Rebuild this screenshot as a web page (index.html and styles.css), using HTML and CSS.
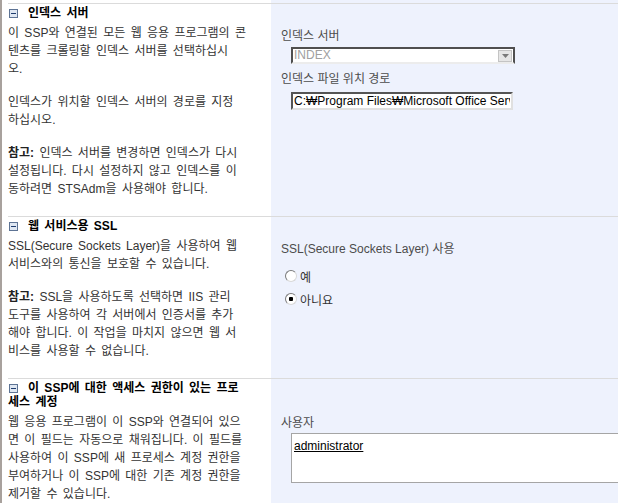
FILE: index.html
```html
<!DOCTYPE html>
<html lang="ko">
<head>
    <meta charset="UTF-8">
    <title>공유 서비스 공급자 편집</title>
    <link rel="stylesheet" href="styles.css">
</head>
<body>
    <div class="page">
        <section class="row">
            <div class="info">
                <div class="info-body">
                    <h3 class="section-title"><span class="toggle"><svg width="9" height="9" viewBox="0 0 9 9"><rect x="0.5" y="0.5" width="8" height="8" fill="#dfe7f2" stroke="#5d7394"/><path d="M2 4.5h5" stroke="#1e3c6e"/></svg></span>인덱스 서버</h3>
                    <p class="desc">이 SSP와 연결된 모든 웹 응용 프로그램의 콘<br>텐츠를 크롤링할 인덱스 서버를 선택하십시<br>오.</p>
                    <p class="desc">인덱스가 위치할 인덱스 서버의 경로를 지정<br>하십시오.</p>
                    <p class="desc"><b>참고:</b> 인덱스 서버를 변경하면 인덱스가 다시<br>설정됩니다. 다시 설정하지 않고 인덱스를 이<br>동하려면 STSAdm을 사용해야 합니다.</p>
                </div>
            </div>
            <div class="controls">
                <div class="controls-body">
                    <label class="field-label">인덱스 서버</label>
                    <div class="select is-disabled">
                        <span class="select-value">INDEX</span>
                        <span class="select-arrow"><svg width="7" height="4" viewBox="0 0 7 4"><path d="M0 0h7L3.5 4z" fill="#7a7a7a"/></svg></span>
                    </div>
                    <label class="field-label">인덱스 파일 위치 경로</label>
                    <input class="text-input" type="text" value="C:₩Program Files₩Microsoft Office Servers₩12.0₩Data₩Office Server₩Applications">
                </div>
            </div>
        </section>

        <section class="row">
            <div class="info">
                <div class="info-body">
                    <h3 class="section-title"><span class="toggle"><svg width="9" height="9" viewBox="0 0 9 9"><rect x="0.5" y="0.5" width="8" height="8" fill="#dfe7f2" stroke="#5d7394"/><path d="M2 4.5h5" stroke="#1e3c6e"/></svg></span>웹 서비스용 SSL</h3>
                    <p class="desc">SSL(Secure Sockets Layer)을 사용하여 웹<br>서비스와의 통신을 보호할 수 있습니다.</p>
                    <p class="desc"><b>참고:</b> SSL을 사용하도록 선택하면 IIS 관리<br>도구를 사용하여 각 서버에서 인증서를 추가<br>해야 합니다. 이 작업을 마치지 않으면 웹 서<br>비스를 사용할 수 없습니다.</p>
                </div>
            </div>
            <div class="controls">
                <div class="controls-body">
                    <label class="field-label">SSL(Secure Sockets Layer) 사용</label>
                    <div class="radio-group">
                        <label class="radio"><input type="radio" name="ssl">예</label>
                        <label class="radio"><input type="radio" name="ssl" checked>아니요</label>
                    </div>
                </div>
            </div>
        </section>

        <section class="row">
            <div class="info">
                <div class="info-body">
                    <h3 class="section-title"><span class="toggle"><svg width="9" height="9" viewBox="0 0 9 9"><rect x="0.5" y="0.5" width="8" height="8" fill="#dfe7f2" stroke="#5d7394"/><path d="M2 4.5h5" stroke="#1e3c6e"/></svg></span>이 SSP에 대한 액세스 권한이 있는 프로<br>세스 계정</h3>
                    <p class="desc">웹 응용 프로그램이 이 SSP와 연결되어 있으<br>면 이 필드는 자동으로 채워집니다. 이 필드를<br>사용하여 이 SSP에 새 프로세스 계정 권한을<br>부여하거나 이 SSP에 대한 기존 계정 권한을<br>제거할 수 있습니다.</p>
                </div>
            </div>
            <div class="controls">
                <div class="controls-body tall">
                    <label class="field-label">사용자</label>
                    <div class="people-picker"><span class="user">administrator</span></div>
                </div>
            </div>
        </section>
    </div>
</body>
</html>
```

FILE: styles.css
```css
html, body {
    overflow: hidden;
}

body {
    margin: 0;
    padding: 0;
    font-family: "Liberation Sans", "Noto Sans CJK KR", sans-serif;
    font-size: 12px;
    color: #333;
    background: white;
}

.page {
    border-left: 2px solid #a8a19d;
    min-height: 503px;
}

.row {
    display: grid;
    grid-template-columns: 269px 1fr;
}

.info {
    padding: 3px 0 15px 6px;
}

.info-body {
    border-top: 1px solid #dbdbdb;
    padding-top: 2px;
}

.section-title {
    margin: 0 0 4px 0;
    font-size: 12px;
    line-height: 14px;
    font-weight: bold;
    color: #000;
    word-spacing: 2px;
}

.toggle {
    display: inline-block;
    width: 9px;
    height: 9px;
    margin: 0 10px 0 1px;
    vertical-align: -1px;
}

.toggle svg {
    display: block;
}

.desc {
    margin: 0;
    line-height: 18px;
    word-spacing: 2px;
    white-space: nowrap;
}

.desc + .desc {
    margin-top: 15px;
}

.desc b {
    color: #222;
}

.controls {
    background-color: #eef2fd;
    padding-top: 3px;
    overflow: hidden;
}

.controls-body {
    border-top: 1px solid #dbdbdb;
    padding: 23px 0 0 10px;
}

.controls-body.tall {
    padding-top: 35px;
}

.field-label {
    display: block;
    line-height: 18px;
    color: #4c4c4c;
}

.select {
    display: flex;
    align-items: center;
    width: 224px;
    height: 17px;
    margin: 2px 0 6px 10px;
    box-sizing: border-box;
    border: 2px solid #4f4f4f;
    border-bottom-color: #ececec;
    background: white;
}

.select-value {
    flex: 1;
    padding-left: 1px;
    color: #a0a0a0;
    line-height: 13px;
}

.select-arrow {
    display: flex;
    align-items: center;
    justify-content: center;
    width: 14px;
    height: 12px;
    margin-right: 1px;
    background: #e6e6e6;
    border: 1px solid #c4c4c4;
    box-sizing: border-box;
}

.text-input {
    display: block;
    width: 222px;
    height: 18px;
    margin: 4px 0 0 10px;
    padding: 0 1px;
    box-sizing: border-box;
    border: 2px solid;
    border-color: #555 #e0e0e0 #e0e0e0 #555;
    background: white;
    font-family: "Liberation Sans", "Noto Sans CJK KR", sans-serif;
    font-size: 12px;
    color: #000;
    outline: none;
}

.radio-group {
    display: flex;
    flex-direction: column;
    gap: 5px;
    margin-top: 9px;
    padding-left: 4px;
}

.radio {
    display: flex;
    align-items: center;
    gap: 3px;
    height: 18px;
    color: #333;
}

.radio input {
    appearance: none;
    width: 12px;
    height: 12px;
    margin: 0;
    border-radius: 50%;
    border: 1px solid;
    border-color: #7a7a7a #d8d8d8 #d8d8d8 #7a7a7a;
    background: white;
}

.radio input:checked {
    background: radial-gradient(circle, #000 0 2px, white 2.5px);
}

.people-picker {
    width: 380px;
    height: 50px;
    margin: 1px 0 0 10px;
    padding: 3px 2px;
    box-sizing: border-box;
    border: 1px solid #a5a5a5;
    background: white;
    line-height: 18px;
}

.user {
    color: #000;
    text-decoration: underline;
}
```
